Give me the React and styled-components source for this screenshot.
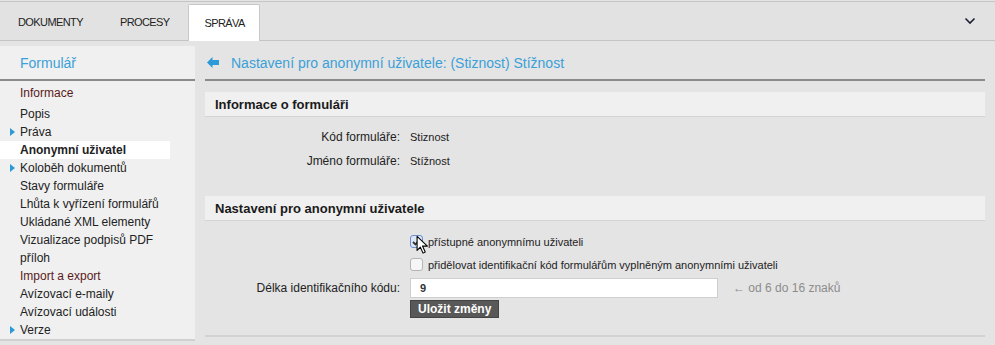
import React from 'react';
import styled, { createGlobalStyle } from 'styled-components';

const Global = createGlobalStyle`
  html, body {
    margin: 0;
    padding: 0;
    background: #e4e4e4;
    font-family: "Liberation Sans", Arial, sans-serif;
    color: #222;
  }
`;

const Page = styled.div`
  width: 995px;
  height: 345px;
  overflow: hidden;
  background: #e4e4e4;
`;

const TopBar = styled.div`
  height: 38px;
  margin-top: 1px;
  border-top: 1px solid #c4c4c4;
  border-bottom: 1px solid #c4c4c4;
  background: #e2e2e2;
  display: flex;
  align-items: stretch;
`;

const Tab = styled.div`
  display: flex;
  align-items: center;
  padding: ${p => (p.active ? '0 14px 0 15px' : '0 18px 0 17px')};
  font-size: 11px;
  letter-spacing: -0.6px;
  color: #222;
  margin-top: ${p => (p.active ? '2px' : '0')};
  margin-bottom: ${p => (p.active ? '-1px' : '0')};
  background: ${p => (p.active ? '#fff' : 'transparent')};
  border: 1px solid ${p => (p.active ? '#c8c8c8' : 'transparent')};
  border-bottom: none;
  border-radius: 2px 2px 0 0;
`;

const Chevron = styled.div`
  margin-left: auto;
  width: 50px;
  display: flex;
  align-items: center;
  justify-content: center;
`;

const Body = styled.div`
  display: flex;
  gap: 10px;
  margin-top: 5px;
`;

const Sidebar = styled.div`
  width: 195px;
  height: 295px;
  background: #f0f0f0;
  border-bottom: 2px solid #d0d0d0;
  box-sizing: border-box;
`;

const SideTitle = styled.div`
  height: 35px;
  border-bottom: 2px solid #8a8a8a;
  display: flex;
  align-items: center;
  padding-left: 20px;
  box-sizing: border-box;
  font-size: 14px;
  color: #3aa0d8;
`;

const Menu = styled.div`
  padding-top: 3px;
`;

const MenuItem = styled.div`
  position: relative;
  height: 18px;
  line-height: 18px;
  padding-left: 20px;
  width: 170px;
  box-sizing: border-box;
  font-size: 12px;
  color: ${p => (p.dark ? '#5a1a1a' : '#222')};
  font-weight: ${p => (p.active ? 'bold' : 'normal')};
  background: ${p => (p.active ? '#fff' : 'transparent')};
  margin-bottom: ${p => (p.gap ? '3px' : '0')};

  &::before {
    content: '';
    display: ${p => (p.arrow ? 'block' : 'none')};
    position: absolute;
    left: 10px;
    top: 5px;
    border-left: 5px solid #2b9ad6;
    border-top: 4px solid transparent;
    border-bottom: 4px solid transparent;
  }
`;

const Main = styled.div`
  width: 780px;
  height: 289px;
  border-bottom: 2px solid #d2d2d2;
`;

const TitleRow = styled.div`
  height: 35px;
  border-bottom: 2px solid #8a8a8a;
  display: flex;
  align-items: center;
  gap: 12px;
  padding-left: 2px;
  box-sizing: border-box;
  font-size: 14px;
  color: #3aa0d8;
`;

const SectionHead = styled.div`
  margin-top: ${p => p.top}px;
  height: 24px;
  background: #f0f0f0;
  border-bottom: 1px solid #d4d4d4;
  display: flex;
  align-items: center;
  padding-left: 10px;
  font-size: 13px;
  color: #1a1a1a;
  font-weight: bold;
`;

const Form = styled.div`
  padding-top: ${p => p.top}px;
  display: grid;
  grid-template-columns: 195px 1fr;
  column-gap: 10px;
  align-items: center;
`;

const Label = styled.div`
  text-align: right;
  font-size: 12px;
  color: #222;
  height: ${p => p.h || 24}px;
  line-height: ${p => p.h || 24}px;
`;

const Value = styled.div`
  font-size: 11px;
  color: #222;
  height: ${p => p.h || 24}px;
  display: flex;
  align-items: center;
  gap: 5px;
  position: relative;
`;

const Box = styled.span`
  width: 11px;
  height: 11px;
  border-radius: 3px;
  background: ${p => (p.checked ? '#dce6f4' : '#f6f6f6')};
  border: 1px solid ${p => (p.checked ? '#6b8fd0' : '#b4b4b4')};
  display: inline-flex;
  align-items: center;
  justify-content: center;
  flex: none;
`;

const Input = styled.div`
  width: 297px;
  height: 18px;
  background: #fff;
  border: 1px solid #cfcfcf;
  font-size: 11px;
  line-height: 18px;
  padding-left: 9px;
  font-weight: bold;
  color: #333;
`;

const Hint = styled.span`
  margin-left: 10px;
  font-size: 12px;
  color: #8c8c8c;
`;

const Button = styled.div`
  background: #585858;
  color: #fff;
  font-weight: bold;
  font-size: 12px;
  height: 16px;
  line-height: 16px;
  padding: 0 7px;
  border: 1px solid #444;
`;

const Cursor = styled.svg`
  position: absolute;
  left: 6px;
  top: 5px;
`;

const menu = [
  { t: 'Informace', dark: true, gap: true },
  { t: 'Popis' },
  { t: 'Práva', arrow: true },
  { t: 'Anonymní uživatel', active: true },
  { t: 'Koloběh dokumentů', arrow: true },
  { t: 'Stavy formuláře' },
  { t: 'Lhůta k vyřízení formulářů' },
  { t: 'Ukládané XML elementy' },
  { t: 'Vizualizace podpisů PDF' },
  { t: 'příloh' },
  { t: 'Import a export', dark: true },
  { t: 'Avízovací e-maily' },
  { t: 'Avízovací události' },
  { t: 'Verze', arrow: true },
];

export default function App() {
  return (
    <Page>
      <Global />
      <TopBar>
        <Tab>DOKUMENTY</Tab>
        <Tab>PROCESY</Tab>
        <Tab active>SPRÁVA</Tab>
        <Chevron>
          <svg width="12" height="8" viewBox="0 0 12 8">
            <path d="M1.5 1.5 L6 6 L10.5 1.5" fill="none" stroke="#1c2233" strokeWidth="1.6" />
          </svg>
        </Chevron>
      </TopBar>
      <Body>
        <Sidebar>
          <SideTitle>Formulář</SideTitle>
          <Menu>
            {menu.map(m => (
              <MenuItem key={m.t} active={m.active} arrow={m.arrow} dark={m.dark} gap={m.gap}>
                {m.t}
              </MenuItem>
            ))}
          </Menu>
        </Sidebar>
        <Main>
          <TitleRow>
            <svg width="12" height="11" viewBox="0 0 12 11">
              <path d="M0 5.5 L5.5 0 L5.5 3 L12 3 L12 8 L5.5 8 L5.5 11 Z" fill="#2b9ad6" />
            </svg>
            <span>Nastavení pro anonymní uživatele: (Stiznost) Stížnost</span>
          </TitleRow>
          <SectionHead top={11}>Informace o formuláři</SectionHead>
          <Form top={8}>
            <Label>Kód formuláře:</Label>
            <Value>Stiznost</Value>
            <Label>Jméno formuláře:</Label>
            <Value>Stížnost</Value>
          </Form>
          <SectionHead top={23}>Nastavení pro anonymní uživatele</SectionHead>
          <Form top={9}>
            <Label h={23} />
            <Value h={23}>
              <Box checked>
                <svg width="9" height="8" viewBox="0 0 9 8">
                  <path d="M1 4 L3.5 6.5 L8 1" fill="none" stroke="#333" strokeWidth="1.8" />
                </svg>
              </Box>
              přístupné anonymnímu uživateli
              <Cursor width="13" height="20" viewBox="0 0 12 18">
                <path d="M1 1 L1 14 L4 11 L6.5 16.5 L8.5 15.5 L6 10 L10.5 10 Z" fill="#fff" stroke="#000" strokeWidth="1" strokeLinejoin="round" />
              </Cursor>
            </Value>
            <Label h={23} />
            <Value h={23}>
              <Box />
              přidělovat identifikační kód formulářům vyplněným anonymními uživateli
            </Value>
            <Label h={24}>Délka identifikačního kódu:</Label>
            <Value h={24}>
              <Input>9</Input>
              <Hint>← od 6 do 16 znaků</Hint>
            </Value>
            <Label h={18} />
            <Value h={18}>
              <Button>Uložit změny</Button>
            </Value>
          </Form>
        </Main>
      </Body>
    </Page>
  );
}
